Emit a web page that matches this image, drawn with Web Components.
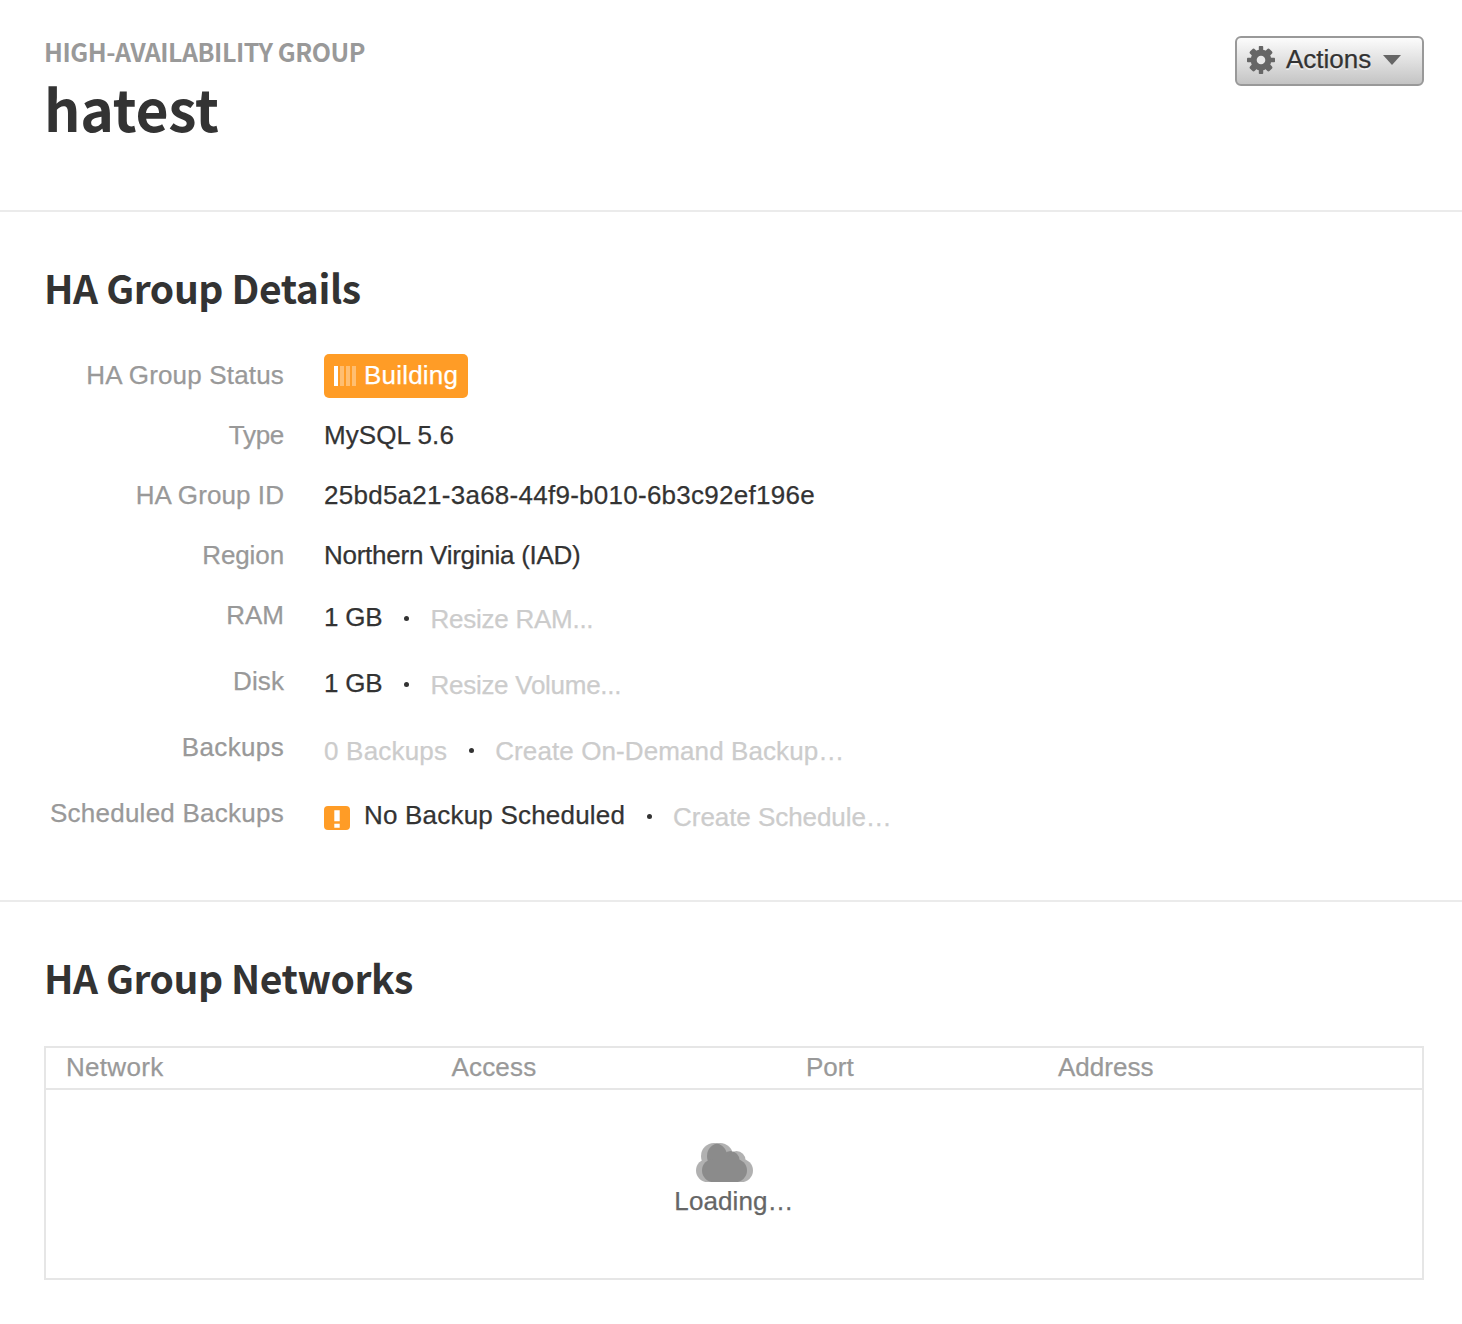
<!DOCTYPE html>
<html lang="en">
<head>
<meta charset="utf-8">
<title>hatest</title>
<style>
html,body{margin:0;background:#fff}
body{font:26px/30px "Liberation Sans",Arial,sans-serif;color:#333;min-height:1324px}
</style>
</head>
<body>
<ha-page></ha-page>
<script>
const define=(name,html)=>customElements.define(name,class extends HTMLElement{
  constructor(){super();this.attachShadow({mode:'open'}).innerHTML=html;}
});

define('fit-text',`<style>:host{display:inline-block;white-space:pre}</style><slot></slot>`);

define('gear-icon',`<style>:host{display:block;width:28px;height:28px;margin-top:2px}svg{display:block}</style>
<svg width="28" height="28" viewBox="-14 -14 28 28" fill="#666">
<rect x="-2.200" y="-14" width="4.400" height="28" rx=".8"/><rect x="-14" y="-2.200" width="28" height="4.400" rx=".8"/>
<g transform="rotate(45)"><rect x="-3.300" y="-13.800" width="6.600" height="27.600" rx="1.800"/><rect x="-13.800" y="-3.300" width="27.600" height="6.600" rx="1.800"/></g>
<circle r="10.400"/><circle r="4.300" fill="#e8e8e8"/></svg>`);

define('action-button',`<style>
:host{display:flex;box-sizing:border-box;width:189px;height:50px;border:2px solid #999;border-radius:6px;background:linear-gradient(#fcfcfc,#c4c4c4);align-items:center;padding:0 0 4px 10px;color:#333;text-shadow:0 2px 0 rgba(255,255,255,.6)}
.t{margin-left:11px;width:86px;white-space:nowrap;-webkit-text-stroke:.25px}
svg{display:block;margin:2px 0 0 11px}
</style><gear-icon></gear-icon><span class="t"><slot></slot></span>
<svg width="18" height="10" viewBox="0 0 18 10"><path d="M0 0H18L9 10Z" fill="#666"/></svg>`);

define('page-header',`<style>
:host{display:flex;box-sizing:border-box;height:212px;border-bottom:2px solid #ebebeb;padding:34px 38px 0 44px;justify-content:space-between;align-items:flex-start}
.k{font:700 25px/34px "Noto Sans CJK SC",sans-serif;color:#999;white-space:nowrap;letter-spacing:-.45px}
h1{margin:-1px 0 0;font:700 57px/80px "Noto Sans CJK SC",sans-serif;color:#333;letter-spacing:-.2px}
.a{padding-top:2px}
</style><div><div class="k"><fit-text><slot name="kind"></slot></fit-text></div><h1><fit-text><slot name="name"></slot></fit-text></h1></div><div class="a"><slot name="actions"></slot></div>`);

define('page-section',`<style>
:host{display:block;box-sizing:border-box;padding:45px 38px 0 44px}
:host([divided]){height:690px;border-bottom:2px solid #ebebeb}
h2{margin:0 0 28px;font:700 39px/60px "Noto Sans CJK SC",sans-serif;color:#333;letter-spacing:-.4px}
:host(:not([divided])) h2{margin-bottom:39px;letter-spacing:-.45px}
</style><h2><fit-text><slot name="title"></slot></fit-text></h2><slot></slot>`);

define('detail-row',`<style>
:host{display:flex;height:60px;line-height:60px;white-space:nowrap;-webkit-text-stroke:.25px}
:host([tall]){height:66px}
.l{width:240px;text-align:right;color:#999;margin-right:40px;flex:none}
.v{display:flex;align-items:flex-start;height:60px}
</style><span class="l"><fit-text><slot name="label"></slot></fit-text></span><span class="v"><slot></slot></span>`);

define('plain-text',`<style>:host{display:block}:host([low]){padding-top:2px}</style><fit-text><slot></slot></fit-text>`);
define('dead-link',`<style>:host{display:block;color:#ccc;padding-top:4px}</style><fit-text><slot></slot></fit-text>`);
define('dot-sep',`<style>:host{display:flex;width:48px;height:64px;align-items:center;justify-content:center}i{width:5px;height:5px;border-radius:50%;background:#333;margin:2px 0 0 1px}</style><i></i>`);
define('status-badge',`<style>
:host{display:flex;box-sizing:border-box;width:144px;height:44px;margin-top:9px;border-radius:5px;background:#ff9c26;color:#fff;line-height:42px;padding-left:10px;letter-spacing:.2px}
.b{display:flex;gap:2px;margin:12px 8px 0 0}i{width:4px;height:20px;background:rgba(255,255,255,.35)}i:first-child{background:#fff}
</style><span class="b"><i></i><i></i><i></i><i></i></span><fit-text><slot></slot></fit-text>`);
define('warning-icon',`<style>:host{display:block;width:26px;height:24px;margin:23px 14px 0 0}svg{display:block}</style>
<svg width="26" height="24" viewBox="0 0 26 24"><rect width="26" height="24" rx="4" fill="#ff9c26"/><path d="M10.300 4.300h5.400v11h-5.400zM10.300 17.800h5.400v4h-5.400z" fill="#fff"/></svg>`);

const cloud='<circle cx="18" cy="13" r="13"/><circle cx="11.500" cy="27.500" r="11.500"/><circle cx="34.500" cy="17" r="9"/><circle cx="39.500" cy="27.500" r="11.500"/><rect x="11.500" y="16" width="28" height="23"/>';
define('cloud-icon',`<style>:host{display:block;width:57px;height:39px}svg{display:block}g{opacity:.5}</style>
<svg width="57" height="39" viewBox="0 0 57 39" fill="#666"><g>${cloud}</g><g transform="translate(6)">${cloud}</g></svg>`);

define('network-table',`<style>
:host{display:block;box-sizing:border-box;width:1380px;height:234px;border:2px solid #e6e6e6;-webkit-text-stroke:.25px}
.h{display:grid;grid-template-columns:385.500px 354.500px 252px 1fr;padding-left:20px;height:40px;line-height:38px;border-bottom:2px solid #e6e6e6;color:#999}
.b{display:flex;flex-direction:column;align-items:center;padding-top:53px;color:#666}
cloud-icon{margin:0 20px 1px 0}.x{line-height:36px;letter-spacing:.1px}
</style><div class="h"><fit-text style="letter-spacing:.3px">Network</fit-text><fit-text style="letter-spacing:.17px">Access</fit-text><fit-text>Port</fit-text><fit-text>Address</fit-text></div>
<div class="b"><cloud-icon></cloud-icon><fit-text class="x">Loading…</fit-text></div>`);

define('ha-page',`<style>:host{display:block}</style>
<page-header><span slot="kind">HIGH-AVAILABILITY GROUP</span><span slot="name">hatest</span><action-button slot="actions">Actions</action-button></page-header>
<page-section divided><span slot="title">HA Group Details</span>
<detail-row><span slot="label" style="letter-spacing:.17px">HA Group Status</span><status-badge>Building</status-badge></detail-row>
<detail-row><span slot="label" style="letter-spacing:-.3px">Type</span><plain-text style="letter-spacing:.1px">MySQL 5.6</plain-text></detail-row>
<detail-row><span slot="label" style="letter-spacing:.08px">HA Group ID</span><plain-text style="letter-spacing:.262px">25bd5a21-3a68-44f9-b010-6b3c92ef196e</plain-text></detail-row>
<detail-row><span slot="label" style="letter-spacing:-.1px">Region</span><plain-text style="letter-spacing:-.26px">Northern Virginia (IAD)</plain-text></detail-row>
<detail-row tall><span slot="label">RAM</span><plain-text low style="letter-spacing:-.2px">1 GB</plain-text><dot-sep></dot-sep><dead-link style="letter-spacing:-.25px">Resize RAM...</dead-link></detail-row>
<detail-row tall><span slot="label" style="letter-spacing:.1px">Disk</span><plain-text low style="letter-spacing:-.2px">1 GB</plain-text><dot-sep></dot-sep><dead-link style="letter-spacing:-.27px">Resize Volume...</dead-link></detail-row>
<detail-row tall><span slot="label" style="letter-spacing:.35px">Backups</span><dead-link style="letter-spacing:.2px">0 Backups</dead-link><dot-sep></dot-sep><dead-link style="letter-spacing:.1px">Create On-Demand Backup…</dead-link></detail-row>
<detail-row tall><span slot="label" style="letter-spacing:.25px">Scheduled Backups</span><warning-icon></warning-icon><plain-text low style="letter-spacing:.2px">No Backup Scheduled</plain-text><dot-sep></dot-sep><dead-link style="letter-spacing:-.06px">Create Schedule…</dead-link></detail-row>
</page-section>
<page-section><span slot="title">HA Group Networks</span><network-table></network-table></page-section>`);
</script>
</body>
</html>
